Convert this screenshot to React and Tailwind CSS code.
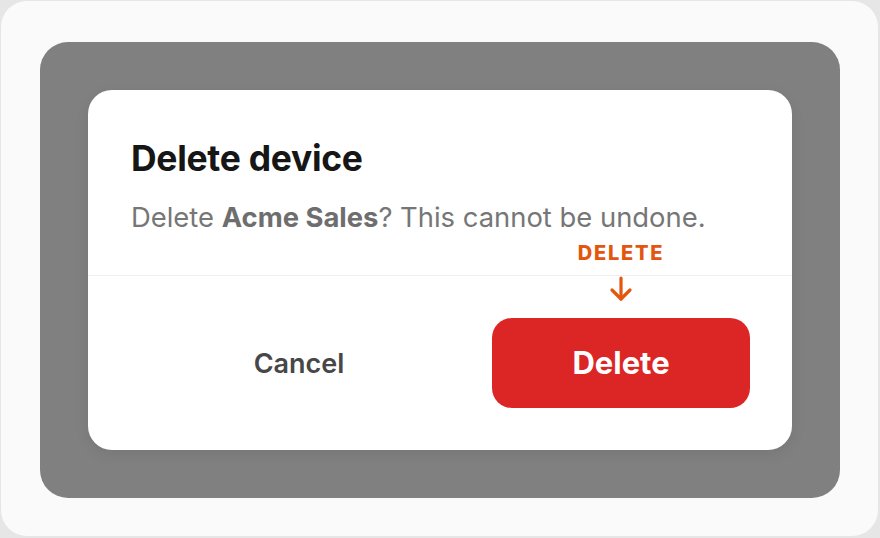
import React from "react";

const font = { fontFamily: "Inter, 'Noto Sans', sans-serif" };

function ArrowDown() {
  return (
    <svg width="24" height="26" viewBox="0 0 24 26" fill="none" stroke="#e2560e" strokeWidth="3.2" strokeLinecap="round" strokeLinejoin="round">
      <path d="M12 2v21" />
      <path d="M3 14l9 9 9-9" />
    </svg>
  );
}

export default function App() {
  return (
    <div className="w-[880px] h-[538px] bg-[#e6e6e6] pl-[1px] pt-[1px]" style={font}>
      <div className="w-[877px] h-[535px] rounded-[26px] bg-[#fafafa] pl-[39px] pt-[41px]">
        <div className="w-[800px] h-[456px] rounded-[28px] bg-[#808080] p-[48px]">
          <div className="relative w-[704px] h-[360px] rounded-[24px] bg-white shadow-[0_4px_14px_rgba(0,0,0,0.08)] flex flex-col">
            <div className="h-[186px] pl-[43px] pt-[48px] border-b border-[#f0f0f0]">
              <h1 className="text-[35.5px] leading-[42px] font-bold text-[#161616] tracking-[-0.3px] whitespace-nowrap">
                Delete device
              </h1>
              <p className="mt-[21px] text-[27.4px] leading-[33px] text-[#767676] whitespace-nowrap">
                Delete <span className="font-bold text-[#6e6e6e]">Acme Sales</span>? This cannot be undone.
              </p>
            </div>
            <div className="flex-1 flex items-center justify-between px-[42px] pb-[1px]">
              <button className="w-[338px] h-[90px] pt-[3px] text-[27px] font-semibold text-[#474747]">
                Cancel
              </button>
              <button className="w-[258px] h-[90px] pt-[2px] rounded-[20px] bg-[#dc2626] text-[31px] font-bold text-white">
                Delete
              </button>
            </div>
            <div className="absolute left-[404px] top-[150px] w-[258px] flex flex-col items-center">
              <span className="text-[20px] leading-[26px] font-extrabold tracking-[1.8px] text-[#e2560e]">
                DELETE
              </span>
              <span className="mt-[10px]">
                <ArrowDown />
              </span>
            </div>
          </div>
        </div>
      </div>
    </div>
  );
}
